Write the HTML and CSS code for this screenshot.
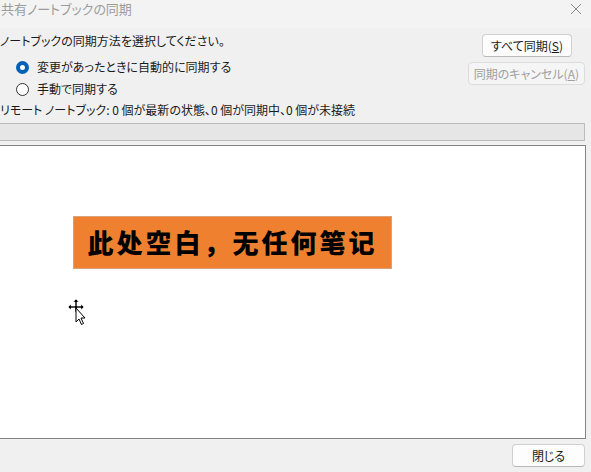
FILE: index.html
```html
<!DOCTYPE html>
<html lang="ja">
<head>
  <meta charset="UTF-8">
  <title>共有ノートブックの同期</title>
  <link rel="stylesheet" href="styles.css">
</head>
<body>

<div class="window">
  <div class="titlebar">
    <span class="title">共有ノートブックの同期</span>
    <svg class="close-btn" width="12" height="12" viewBox="0 0 12 12">
      <path d="M1 1 L11 11 M11 1 L1 11" stroke="#8a8a8a" stroke-width="1"/>
    </svg>
  </div>

  <div class="top">
    <div class="options">
      <div class="prompt">ノートブックの同期方法を選択してください。</div>
      <label class="radio-row"><span class="radio checked"></span>変更があったときに自動的に同期する</label>
      <label class="radio-row"><span class="radio"></span>手動で同期する</label>
    </div>
    <div class="actions">
      <button class="btn">すべて同期(<u>S</u>)</button>
      <button class="btn disabled">同期のキャンセル(<u>A</u>)</button>
    </div>
  </div>

  <div class="status">リモート ノートブック: 0 個が最新の状態、0 個が同期中、0 個が未接続</div>
  <div class="progress"></div>

  <div class="notes">
    <div class="empty-banner">此处空白，无任何笔记</div>
    <svg class="cursor" width="22" height="28" viewBox="0 0 22 28">
      <path d="M9 1 L6 4 H8 V8 H4 V6 L1 9 L4 12 V10 H8 V14 H10 V10 H14 V12 L17 9 L14 6 V8 H10 V4 H12 Z" fill="#000" stroke="#fff" stroke-width="0.6"/>
      <path d="M9 10 V24 L12 21 L14.5 26.5 L16.5 25.5 L14 20 H18 Z" fill="#fff" stroke="#000" stroke-width="1"/>
    </svg>
  </div>

  <div class="footer">
    <button class="btn close">閉じる</button>
  </div>
</div>

</body>
</html>
```

FILE: styles.css
```css
* {
  margin: 0; padding: 0; box-sizing: border-box;
}
body {
  font-family: "Noto Sans CJK JP", "Noto Sans", sans-serif;
  font-feature-settings: "palt";
  font-size: 12px;
  color: #1a1a1a;
  background: #f0f0f0;
  width: 591px;
  height: 472px;
  overflow: hidden;
}

.window {
  display: flex;
  flex-direction: column;
  height: 100%;
}

.titlebar {
  height: 28px;
  display: flex;
  justify-content: space-between;
  align-items: flex-start;
  padding: 0 9px 0 1px;
  background: #f3f3f3;
}
.title {
  color: #9c9c9c;
  font-size: 13px;
  line-height: 17px;
}
.close-btn {
  margin-top: 3px;
}

.top {
  display: flex;
  justify-content: space-between;
  padding-right: 6px;
}

.options {
  padding-top: 5px;
}
.prompt {
  line-height: 16px;
  margin-bottom: 7px;
}
.radio-row {
  display: flex;
  align-items: center;
  gap: 8px;
  padding-left: 16px;
  height: 22px;
  line-height: 16px;
}
.radio {
  width: 13px;
  height: 13px;
  border: 1px solid #333;
  border-radius: 50%;
  background: #fff;
}
.radio.checked {
  border: 4px solid #0060b8;
}

.actions {
  display: flex;
  flex-direction: column;
  align-items: flex-end;
  gap: 5px;
  padding-top: 6px;
}

.btn {
  font-family: inherit;
  font-feature-settings: "palt";
  font-size: 12px;
  color: #1a1a1a;
  background: #fdfdfd;
  border: 1px solid #d0d0d0;
  border-bottom-color: #b8b8b8;
  border-radius: 4px;
  height: 23px;
  padding: 0 8px;
  line-height: 20px;
}
.actions .btn:first-child {
  margin-right: 13px;
}
.btn.disabled {
  color: #a0a0a0;
  background: #f5f5f5;
  border-color: #dcdcdc;
  padding: 0 5px;
}

.status {
  margin-top: 2px;
  line-height: 16px;
}

.progress {
  margin: 5px 6px 0 0;
  height: 18px;
  background: #e6e6e6;
  border: 1px solid #bcbcbc;
  border-left: none;
}

.notes {
  position: relative;
  margin: 4px 5px 0 0;
  height: 294px;
  background: #fff;
  border: 1px solid #848484;
  border-left: none;
  padding: 70px 0 0 73px;
}

.empty-banner {
  display: inline-block;
  width: 319px;
  height: 53px;
  background: #ef8030;
  border: 1px solid #d9a27a;
  color: #000;
  font-family: "Noto Sans CJK SC", sans-serif;
  font-feature-settings: normal;
  font-weight: 900;
  font-size: 26px;
  letter-spacing: 3px;
  line-height: 50px;
  text-align: center;
}

.cursor {
  position: absolute;
  left: 67px;
  top: 152px;
}

.footer {
  display: flex;
  justify-content: flex-end;
  padding: 5px 6px 0 0;
}
.btn.close {
  width: 73px;
  height: 23px;
}
```
